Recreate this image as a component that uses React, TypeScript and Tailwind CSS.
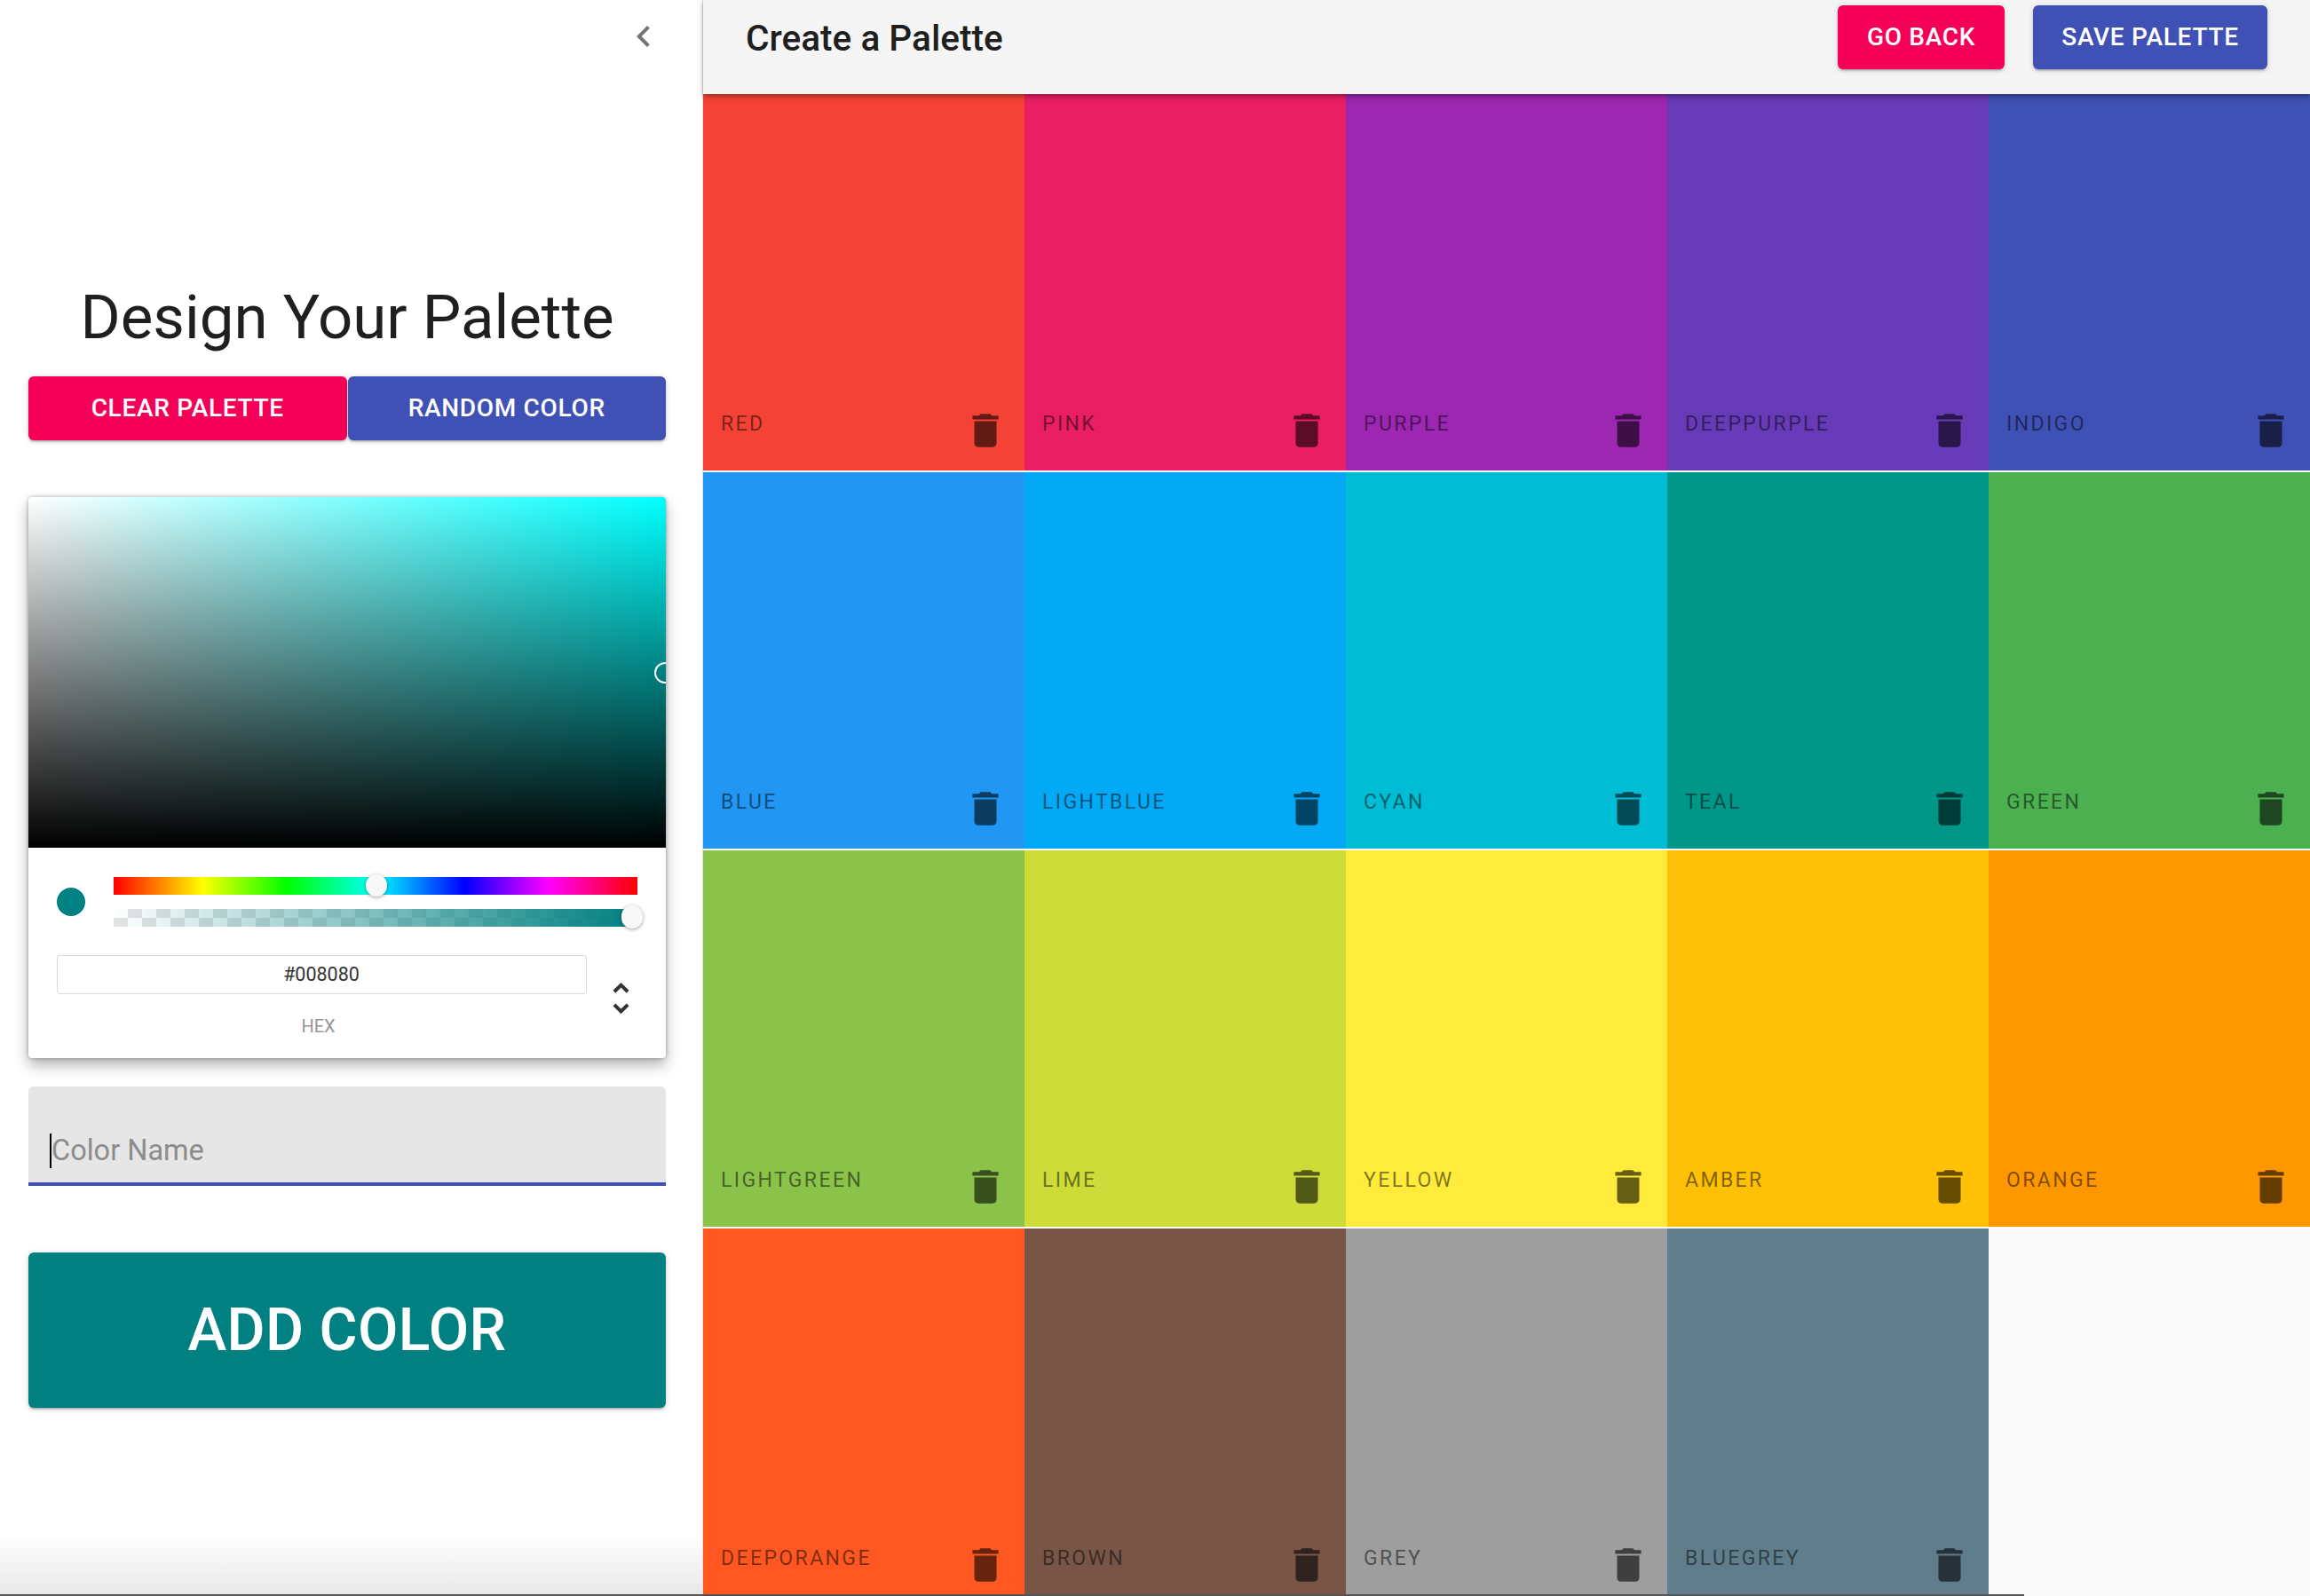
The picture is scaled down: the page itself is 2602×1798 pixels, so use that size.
const boxes = [
  { name: "RED", bg: "bg-[#f44336]" },
  { name: "PINK", bg: "bg-[#e91e63]" },
  { name: "PURPLE", bg: "bg-[#9c27b0]" },
  { name: "DEEPPURPLE", bg: "bg-[#673ab7]" },
  { name: "INDIGO", bg: "bg-[#3f51b5]" },
  { name: "BLUE", bg: "bg-[#2196f3]" },
  { name: "LIGHTBLUE", bg: "bg-[#03a9f4]" },
  { name: "CYAN", bg: "bg-[#00bcd4]" },
  { name: "TEAL", bg: "bg-[#009688]" },
  { name: "GREEN", bg: "bg-[#4caf50]" },
  { name: "LIGHTGREEN", bg: "bg-[#8bc34a]" },
  { name: "LIME", bg: "bg-[#cddc39]" },
  { name: "YELLOW", bg: "bg-[#ffeb3b]" },
  { name: "AMBER", bg: "bg-[#ffc107]" },
  { name: "ORANGE", bg: "bg-[#ff9800]" },
  { name: "DEEPORANGE", bg: "bg-[#ff5722]" },
  { name: "BROWN", bg: "bg-[#795548]" },
  { name: "GREY", bg: "bg-[#9e9e9e]" },
  { name: "BLUEGREY", bg: "bg-[#607d8b]" },
];

const raised =
  "shadow-[0_3px_2px_-2px_rgba(0,0,0,0.2),0_2px_3px_0_rgba(0,0,0,0.14),0_1px_8px_0_rgba(0,0,0,0.12)]";

function ColorBox({ name, bg }: { name: string; bg: string }) {
  return (
    <div className={`flex h-[424px] items-end justify-between pr-[19px] pl-[20px] ${bg}`}>
      <span className="mb-[38px] text-[23px] leading-[28px] tracking-[2.4px] text-black/50">{name}</span>
      <svg viewBox="0 0 24 24" className="mb-[20px] size-[50px] fill-black/60">
        <path d="M6 19c0 1.1.9 2 2 2h8c1.1 0 2-.9 2-2V7H6v12zM19 4h-3.5l-1-1h-5l-1 1H5v2h14V4z" />
      </svg>
    </div>
  );
}

function ColorPicker() {
  return (
    <div className="mt-[64px] h-[632px] overflow-hidden rounded-[4px] bg-white shadow-[0_0_4px_rgba(0,0,0,0.3),0_8px_16px_rgba(0,0,0,0.3)]">
      <div className="relative h-[395px] bg-[linear-gradient(to_top,#000,transparent),linear-gradient(to_right,#fff,#00ffff)]">
        <div className="absolute top-[186px] left-[705px] size-[24px] rounded-full border-2 border-white" />
      </div>

      <div className="flex items-start pt-[33px] pr-[32px] pl-[32px]">
        <div className="mt-[12px] size-[32px] rounded-full bg-[#008080]" />
        <div className="ml-[32px] flex-1">
          <div className="relative h-[20px] bg-[linear-gradient(to_right,#f00_0%,#ff0_17%,#0f0_33%,#0ff_50%,#00f_67%,#f0f_83%,#f00_100%)]">
            <div className="absolute top-[-3px] left-[284px] h-[25px] w-[24px] rounded-full bg-[#f8f8f8] shadow-[0_1px_4px_rgba(0,0,0,0.37)]" />
          </div>
          <div className="relative mt-[16px] h-[20px] bg-[repeating-conic-gradient(#e4e4e4_0_25%,#ffffff_0_50%)] bg-[length:32px_20px]">
            <div className="absolute inset-0 bg-[linear-gradient(to_right,rgba(0,128,128,0),#008080)]" />
            <div className="absolute top-[-4px] left-[572px] h-[26px] w-[24px] rounded-full bg-[#f8f8f8] shadow-[0_1px_4px_rgba(0,0,0,0.37)]" />
          </div>
        </div>
      </div>

      <div className="mt-[32px] flex pr-[32px] pl-[32px]">
        <div className="w-[597px] shrink-0">
          <div className="flex h-[44px] items-center justify-center rounded-[3px] border border-[#dadada] pr-[1px] text-[21.5px] text-[#333]">
            #008080
          </div>
          <div className="mt-[24px] pr-[8px] text-center text-[20px] leading-[24px] text-[#969696]">HEX</div>
        </div>
        <svg viewBox="0 0 24 24" className="mt-[25px] ml-[15px] size-[47px] shrink-0 fill-[#333]">
          <path d="M12,18.17L8.83,15L7.42,16.41L12,21L16.59,16.41L15.17,15M12,5.83L15.17,9L16.58,7.59L12,3L7.41,7.59L8.83,9L12,5.83Z" />
        </svg>
      </div>
    </div>
  );
}

function Sidebar() {
  return (
    <aside className="relative h-full w-[792px] shrink-0 border-r border-[#e0e0e0] bg-white">
      <div className="flex h-[106px] justify-end pt-[17px] pr-[42px]">
        <svg viewBox="0 0 24 24" className="size-[48px] fill-black/55">
          <path d="M15.41 7.41L14 6l-6 6 6 6 1.41-1.41L10.83 12z" />
        </svg>
      </div>

      <div className="pr-[41px] pl-[32px]">
        <h1 className="mt-[212px] text-center text-[69px] leading-[80px] text-[#1f1f1f]">
          Design Your Palette
        </h1>
        <div className="mt-[26px] flex gap-px">
          <button className={`h-[72px] flex-1 rounded-[6px] bg-[#f50057] text-[28px] font-medium tracking-[0.7px] text-white ${raised}`}>
            CLEAR PALETTE
          </button>
          <button className={`h-[72px] flex-1 rounded-[6px] bg-[#3f51b5] text-[28px] font-medium tracking-[0.7px] text-white ${raised}`}>
            RANDOM COLOR
          </button>
        </div>

        <ColorPicker />

        <div className="mt-[32px] flex h-[112px] items-end rounded-t-[6px] border-b-[4px] border-[#3f51b5] bg-[#e6e6e6] pb-[16px] pl-[24px]">
          <span className="h-[39px] w-[2px] bg-black" />
          <span className="text-[32.5px] leading-[39px] text-[#8c8c8c]">Color Name</span>
        </div>

        <button className={`mt-[75px] h-[175px] w-full rounded-[6px] bg-[#008080] text-[66px] font-medium tracking-[0.4px] text-white ${raised}`}>
          ADD COLOR
        </button>
      </div>

      <div className="pointer-events-none absolute inset-x-0 bottom-0 h-[70px] bg-gradient-to-t from-[#e8e8e8] to-white/0" />
    </aside>
  );
}

export default function App() {
  return (
    <div className="relative flex h-[1798px] overflow-hidden bg-white font-['Roboto',sans-serif]">
      <Sidebar />
      <main className="relative flex-1 bg-[#fafafa]">
        <header className="relative z-10 flex h-[106px] items-start justify-between bg-[#f5f5f5] pt-[6px] pr-[48px] pl-[48px] shadow-[0_2px_4px_-1px_rgba(0,0,0,0.2),0_4px_5px_0_rgba(0,0,0,0.14),0_1px_10px_0_rgba(0,0,0,0.12)]">
          <h2 className="mt-[13px] text-[40.6px] leading-[48px] font-medium text-[#1f1f1f]">Create a Palette</h2>
          <div className="flex gap-[32px]">
            <button className={`h-[72px] w-[188px] rounded-[6px] bg-[#f50057] text-[28px] font-medium tracking-[0.7px] text-white ${raised}`}>
              GO BACK
            </button>
            <button className={`h-[72px] w-[264px] rounded-[6px] bg-[#3f51b5] text-[28px] font-medium tracking-[0.7px] text-white ${raised}`}>
              SAVE PALETTE
            </button>
          </div>
        </header>
        <div className="grid grid-cols-5 gap-y-[2px]">
          {boxes.map((box) => (
            <ColorBox key={box.name} name={box.name} bg={box.bg} />
          ))}
        </div>
      </main>
      <div className="pointer-events-none absolute bottom-0 left-0 h-[2px] w-[2280px] bg-[#555]" />
    </div>
  );
}
